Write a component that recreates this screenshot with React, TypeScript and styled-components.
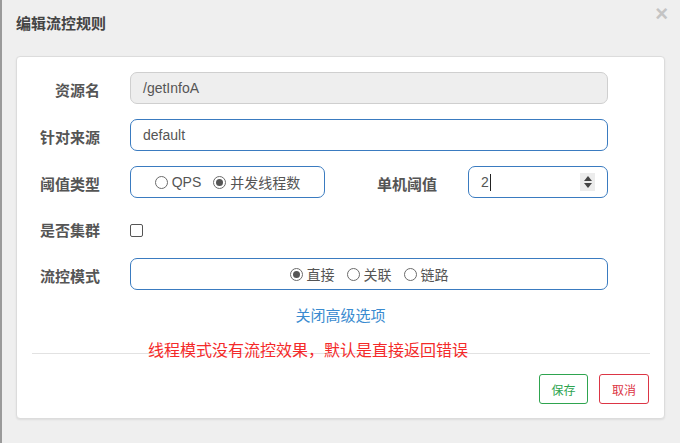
import React from "react";
import styled, { createGlobalStyle } from "styled-components";

const GlobalStyle = createGlobalStyle`
  html, body { margin: 0; padding: 0; background: #efefef; overflow: hidden; }
  body { font-family: "Liberation Sans", Arial, "Noto Sans CJK SC", sans-serif; }
  * { box-sizing: border-box; }
`;

const CJK = `"Liberation Sans", Arial, "Noto Sans CJK SC", sans-serif`;

const Page = styled.div`
  height: 443px;
  width: 680px;
  border-left: 2px solid #9a9a9a;
  padding: 0 15px 0 14px;
  display: flex;
  flex-direction: column;
`;

const Header = styled.div`
  height: 56px;
  display: flex;
  justify-content: space-between;
  align-items: flex-start;
`;

const Title = styled.div`
  margin-top: 14px;
  font-family: ${CJK};
  font-size: 15px;
  line-height: 20px;
  font-weight: bold;
  color: #444;
`;

const Close = styled.div`
  margin-top: 3px;
  margin-right: -3px;
  font-size: 22px;
  line-height: 22px;
  font-weight: bold;
  color: #c4c4c4;
  font-family: "Liberation Sans", Arial, sans-serif;
`;

const Card = styled.div`
  background: #fff;
  border: 1px solid #dcdcdc;
  border-radius: 4px;
  box-shadow: 0 1px 2px rgba(0, 0, 0, 0.08);
  padding-top: 15px;
`;

const Row = styled.div<{ $h?: number; $mb?: number }>`
  display: flex;
  align-items: center;
  height: ${(p) => p.$h ?? 32}px;
  margin-bottom: ${(p) => p.$mb ?? 15}px;
`;

const Label = styled.div<{ $w?: number; $pr?: number }>`
  width: ${(p) => p.$w ?? 83}px;
  padding-right: ${(p) => p.$pr ?? 0}px;
  margin-right: ${(p) => (p.$pr ? 0 : 30)}px;
  padding-top: 2px;
  text-align: right;
  font-family: ${CJK};
  font-size: 15px;
  font-weight: bold;
  color: #555;
`;

const TextInput = styled.div<{ $disabled?: boolean; $w?: number }>`
  width: ${(p) => p.$w ?? 478}px;
  height: 32px;
  display: flex;
  align-items: center;
  padding: 0 12px;
  border: 1px solid ${(p) => (p.$disabled ? "#cfcfcf" : "#3a7bc0")};
  background: ${(p) => (p.$disabled ? "#eeeeee" : "#fff")};
  border-radius: 7px;
  font-size: 14px;
  color: #555;
`;

const Caret = styled.span`
  display: inline-block;
  width: 1px;
  height: 17px;
  background: #222;
  margin-left: 1px;
`;

const Spinner = styled.div`
  margin-left: auto;
  width: 15px;
  height: 18px;
  background: #ececec;
  display: flex;
  flex-direction: column;
  align-items: center;
  justify-content: center;
  gap: 2px;
`;

const Tri = styled.span<{ $down?: boolean }>`
  width: 0;
  height: 0;
  border-left: 4px solid transparent;
  border-right: 4px solid transparent;
  ${(p) =>
    p.$down ? "border-top: 5px solid #444;" : "border-bottom: 5px solid #444;"}
`;

const RadioBox = styled.div<{ $w: number }>`
  width: ${(p) => p.$w}px;
  height: 32px;
  border: 1px solid #3a7bc0;
  border-radius: 7px;
  display: flex;
  align-items: center;
  justify-content: center;
  gap: 12px;
`;

const RadioItem = styled.label`
  display: flex;
  align-items: center;
  gap: 4px;
  font-family: ${CJK};
  font-size: 14px;
  color: #555;
`;

const Circle = styled.span<{ $on?: boolean }>`
  width: 13px;
  height: 13px;
  border-radius: 50%;
  border: 1px solid #6b6b6b;
  background: #fff;
  display: flex;
  align-items: center;
  justify-content: center;
  &::after {
    content: "";
    width: 7px;
    height: 7px;
    border-radius: 50%;
    background: ${(p) => (p.$on ? "#555" : "transparent")};
  }
`;

const Checkbox = styled.span`
  width: 13px;
  height: 13px;
  border: 1px solid #555;
  border-radius: 2px;
  margin-top: 5px;
`;

const LinkText = styled.div`
  margin-top: 16px;
  text-align: center;
  font-family: ${CJK};
  font-size: 15px;
  line-height: 20px;
  color: #3a8bd0;
`;

const Hint = styled.div`
  margin: 14px 0 -9px 131px;
  font-family: ${CJK};
  font-size: 16px;
  line-height: 22px;
  color: #f42a2a;
`;

const Footer = styled.div`
  margin: 0 14px 0 15px;
  border-top: 1px solid #e2e2e2;
  padding: 20px 1px 14px 0;
  display: flex;
  justify-content: flex-end;
  gap: 11px;
`;

const Button = styled.div<{ $color: string; $w: number }>`
  width: ${(p) => p.$w}px;
  height: 30px;
  border: 1px solid ${(p) => p.$color};
  color: ${(p) => p.$color};
  border-radius: 3px;
  display: flex;
  align-items: center;
  justify-content: center;
  font-family: ${CJK};
  font-size: 12px;
`;

const Radio = ({ on, text }: { on?: boolean; text: string }) => (
  <RadioItem>
    <Circle $on={on} />
    {text}
  </RadioItem>
);

export default function App() {
  return (
    <>
      <GlobalStyle />
      <Page>
        <Header>
          <Title>编辑流控规则</Title>
          <Close>×</Close>
        </Header>
        <Card>
          <Row>
            <Label>资源名</Label>
            <TextInput $disabled>/getInfoA</TextInput>
          </Row>
          <Row>
            <Label>针对来源</Label>
            <TextInput>default</TextInput>
          </Row>
          <Row>
            <Label>阈值类型</Label>
            <RadioBox $w={195}>
              <Radio text="QPS" />
              <Radio on text="并发线程数" />
            </RadioBox>
            <Label $w={143} $pr={31}>单机阈值</Label>
            <TextInput $w={140}>
              2<Caret />
              <Spinner>
                <Tri />
                <Tri $down />
              </Spinner>
            </TextInput>
          </Row>
          <Row $h={30}>
            <Label>是否集群</Label>
            <Checkbox />
          </Row>
          <Row $mb={0}>
            <Label>流控模式</Label>
            <RadioBox $w={478}>
              <Radio on text="直接" />
              <Radio text="关联" />
              <Radio text="链路" />
            </RadioBox>
          </Row>
          <LinkText>关闭高级选项</LinkText>
          <Hint>线程模式没有流控效果，默认是直接返回错误</Hint>
          <Footer>
            <Button $color="#2ea44f" $w={49}>保存</Button>
            <Button $color="#dc3545" $w={50}>取消</Button>
          </Footer>
        </Card>
      </Page>
    </>
  );
}
